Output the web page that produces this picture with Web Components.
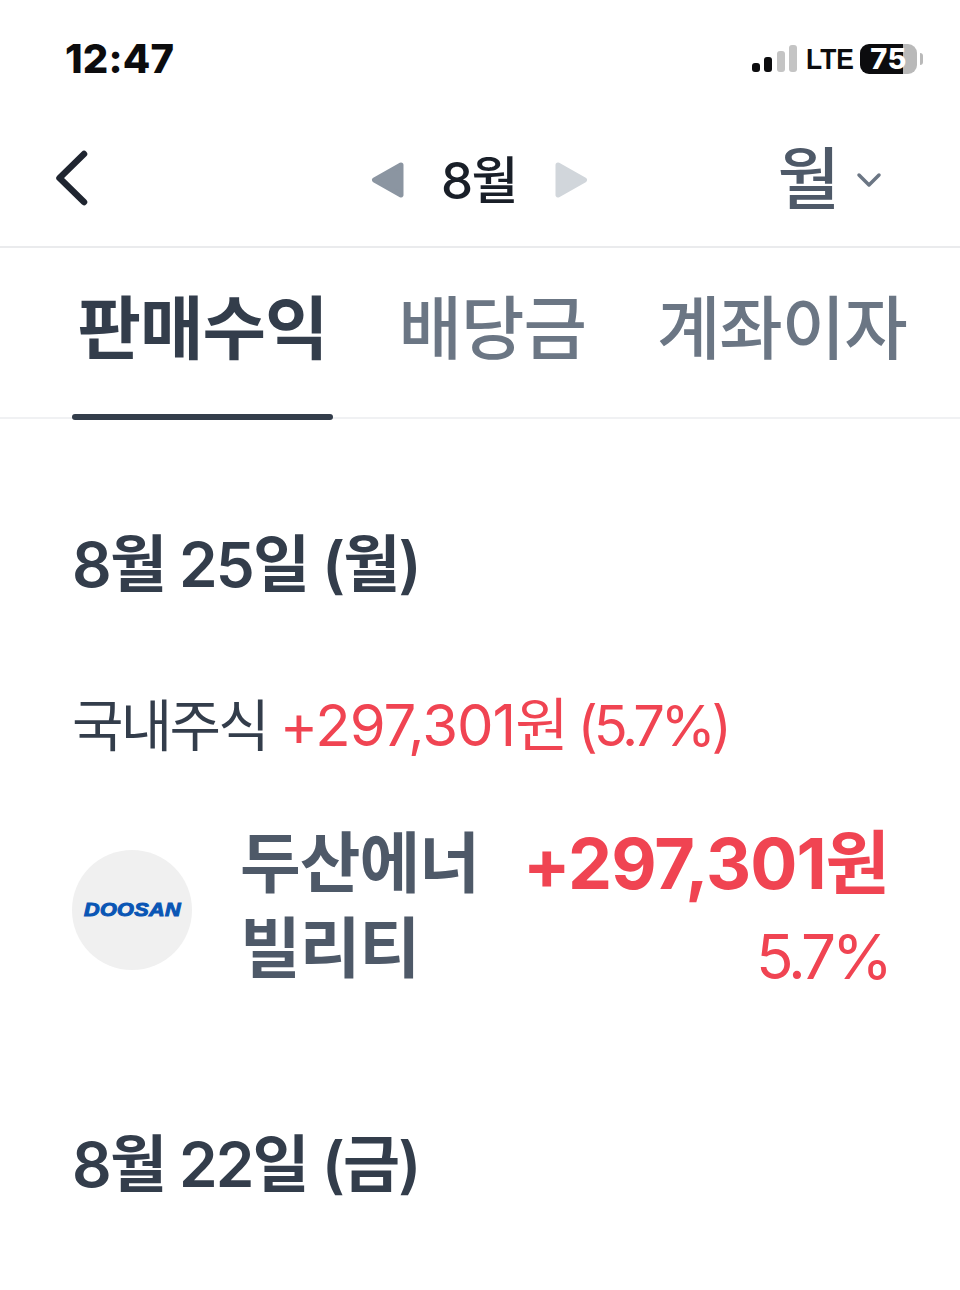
<!DOCTYPE html>
<html lang="ko">
<head>
<meta charset="utf-8">
<title>수익</title>
<style>
    html, body {
        margin: 0;
        padding: 0;
        background: #fff;
        font-family: Inter, "Noto Sans CJK KR", sans-serif;
    }
</style>
</head>
<body>
<status-bar></status-bar>
<nav-bar></nav-bar>
<tab-bar></tab-bar>
<date-heading style="--top:111px">8월 25일 (월)</date-heading>
<market-line></market-line>
<stock-row></stock-row>
<date-heading style="--top:135px">8월 22일 (금)</date-heading>

<script>
class StatusBar extends HTMLElement {
    constructor() {
        super();
        this.shadowDOM = this.attachShadow({ mode: "open" });
    }

    connectedCallback() {
        this.shadowDOM.innerHTML = `
            <style>
                :host {
                    display: flex;
                    justify-content: space-between;
                    align-items: center;
                    height: 118px;
                    box-sizing: border-box;
                    padding: 0 37px 2px 65px;
                    color: #0c0c0e;
                }
                .time {
                    font: 800 40px Inter, sans-serif;
                    letter-spacing: 0.2px;
                }
                .right {
                    display: flex;
                    align-items: center;
                    margin-top: 2px;
                }
                .lte {
                    display: inline-block;
                    font: 700 30px "Liberation Sans", sans-serif;
                    transform: scaleX(0.88);
                    transform-origin: left center;
                    margin: 0 0 0 9px;
                }
                .battery {
                    width: 57px;
                    height: 30px;
                    border-radius: 9px;
                    background: linear-gradient(90deg, #0c0c0e 75%, #b9b9b9 75%);
                    color: #fff;
                    font: 800 29px/30px Inter, sans-serif;
                    text-align: center;
                    letter-spacing: 0.5px;
                }
                .nub {
                    width: 3px;
                    height: 12px;
                    margin-left: 3px;
                    background: #b9b9b9;
                    border-radius: 0 3px 3px 0;
                }
            </style>
            <span class="time">12:47</span>
            <div class="right">
                <svg width="45" height="28" viewBox="0 0 45 28">
                    <rect x="0" y="18" width="8" height="9" rx="3" fill="#0c0c0e"/>
                    <rect x="12" y="12" width="8" height="15" rx="3" fill="#0c0c0e"/>
                    <rect x="25" y="6" width="8" height="21" rx="3" fill="#c4c4c4"/>
                    <rect x="37" y="0" width="8" height="27" rx="3" fill="#c4c4c4"/>
                </svg>
                <span class="lte">LTE</span>
                <div class="battery">75</div>
                <div class="nub"></div>
            </div>
        `;
    }
}

class NavBar extends HTMLElement {
    constructor() {
        super();
        this.shadowDOM = this.attachShadow({ mode: "open" });
    }

    connectedCallback() {
        this.shadowDOM.innerHTML = `
            <style>
                :host {
                    display: grid;
                    grid-template-columns: 1fr auto 1fr;
                    align-items: center;
                    height: 118px;
                    padding: 0 78px 10px 52px;
                    border-bottom: 2px solid #eaebed;
                    color: #191f28;
                }
                .back { display: block; }
                .month {
                    display: flex;
                    align-items: center;
                    gap: 36px;
                    font-size: 51px;
                    font-weight: 500;
                    letter-spacing: -1.5px;
                    margin-left: 25px;
                }
                .month svg { margin-top: 5px; }
                .month svg:last-child { margin-left: 1px; }
                .unit {
                    justify-self: end;
                    display: flex;
                    align-items: center;
                    gap: 16px;
                    font-size: 68px;
                    line-height: 88px;
                    font-weight: 500;
                    color: #4e5968;
                }
                .unit span { margin-top: 3px; }
                .unit svg { margin-top: 6px; }
            </style>
            <svg class="back" width="40" height="60" viewBox="0 0 40 60">
                <path d="M32 7 L7.5 31 L32 55" fill="none" stroke="#1f2530" stroke-width="6.5" stroke-linecap="round" stroke-linejoin="round"/>
            </svg>
            <div class="month">
                <svg width="34" height="38" viewBox="0 0 34 38"><path d="M30 4 L3.5 19 L30 34 Z" fill="#8b95a1" stroke="#8b95a1" stroke-width="5" stroke-linejoin="round"/></svg>
                <span>8월</span>
                <svg width="34" height="38" viewBox="0 0 34 38"><path d="M4 4 L30.5 19 L4 34 Z" fill="#d1d6db" stroke="#d1d6db" stroke-width="5" stroke-linejoin="round"/></svg>
            </div>
            <div class="unit">
                <span>월</span>
                <svg width="26" height="16" viewBox="0 0 26 16"><path d="M3 3 L13 13 L23 3" fill="none" stroke="#6b7684" stroke-width="3.5" stroke-linecap="round" stroke-linejoin="round"/></svg>
            </div>
        `;
    }
}

class TabBar extends HTMLElement {
    constructor() {
        super();
        this.shadowDOM = this.attachShadow({ mode: "open" });
    }

    connectedCallback() {
        this.shadowDOM.innerHTML = `
            <style>
                :host {
                    display: flex;
                    height: 171px;
                    box-sizing: border-box;
                    padding-left: 72px;
                    border-bottom: 2px solid #f0f1f3;
                    font-size: 69px;
                    color: #6b7684;
                    letter-spacing: -1px;
                }
                .tab {
                    display: flex;
                    align-items: center;
                    padding: 0 5.5px 21px;
                    height: 172px;
                    box-sizing: border-box;
                    font-weight: 500;
                    white-space: nowrap;
                }
                .tab.on {
                    font-weight: 700;
                    color: #333d4b;
                    position: relative;
                }
                .tab.on::after {
                    content: "";
                    position: absolute;
                    left: 0;
                    right: 0;
                    bottom: 0;
                    height: 6px;
                    background: #333d4b;
                    border-radius: 3px;
                }
                .tab + .tab { margin-left: 60px; }
            </style>
            <div class="tab on">판매수익</div>
            <div class="tab">배당금</div>
            <div class="tab">계좌이자</div>
        `;
    }
}

class DateHeading extends HTMLElement {
    constructor() {
        super();
        this.shadowDOM = this.attachShadow({ mode: "open" });
    }

    connectedCallback() {
        this.shadowDOM.innerHTML = `
            <style>
                :host {
                    display: block;
                    margin-top: var(--top, 0);
                    padding-left: 72px;
                    font-size: 62px;
                    line-height: 70px;
                    font-weight: 600;
                    color: #333d4b;
                    letter-spacing: -1.8px;
                }
            </style>
            <slot></slot>
        `;
    }
}

class MarketLine extends HTMLElement {
    constructor() {
        super();
        this.shadowDOM = this.attachShadow({ mode: "open" });
    }

    connectedCallback() {
        this.shadowDOM.innerHTML = `
            <style>
                :host {
                    display: block;
                    margin-top: 92px;
                    padding-left: 72px;
                    font-size: 56px;
                    line-height: 66px;
                    color: #333d4b;
                    letter-spacing: -2.8px;
                    white-space: nowrap;
                }
                b { font-weight: 400; color: #f04452; }
                .amount { font-size: 58px; letter-spacing: -1px; }
                .rate { margin-left: -3px; letter-spacing: -4.2px; }
            </style>
            국내주식 <b class="amount">+297,301원</b> <b class="rate">(5.7%)</b>
        `;
    }
}

class StockRow extends HTMLElement {
    constructor() {
        super();
        this.shadowDOM = this.attachShadow({ mode: "open" });
    }

    connectedCallback() {
        this.shadowDOM.innerHTML = `
            <style>
                :host {
                    display: flex;
                    align-items: center;
                    margin-top: 66px;
                    padding: 0 72px;
                    height: 170px;
                }
                .logo {
                    flex: none;
                    width: 120px;
                    height: 120px;
                    border-radius: 50%;
                    background: #f0f0f0;
                    display: flex;
                    align-items: center;
                    justify-content: center;
                    margin-right: 48px;
                }
                .logo span {
                    display: block;
                    color: #0a56b5;
                    font: italic 700 18px "Liberation Sans", sans-serif;
                    letter-spacing: 0.3px;
                    -webkit-text-stroke: 1px #0a56b5;
                    transform: scaleX(1.2);
                }
                .name {
                    flex: none;
                    width: 250px;
                    margin-top: -8px;
                    font-size: 66px;
                    line-height: 85px;
                    font-weight: 600;
                    color: #4e5968;
                    letter-spacing: -1px;
                }
                .values {
                    margin-left: auto;
                    margin-right: -1px;
                    text-align: right;
                    white-space: nowrap;
                }
                .amount {
                    font-size: 70px;
                    line-height: 85px;
                    font-weight: 700;
                    color: #f04452;
                    letter-spacing: -1px;
                }
                .rate {
                    margin-top: 8px;
                    font-size: 62px;
                    line-height: 85px;
                    color: #f04452;
                    letter-spacing: -4px;
                }
            </style>
            <div class="logo"><span>DOOSAN</span></div>
            <div class="name">두산에너빌리티</div>
            <div class="values">
                <div class="amount">+297,301원</div>
                <div class="rate">5.7%</div>
            </div>
        `;
    }
}

customElements.define("status-bar", StatusBar);
customElements.define("nav-bar", NavBar);
customElements.define("tab-bar", TabBar);
customElements.define("date-heading", DateHeading);
customElements.define("market-line", MarketLine);
customElements.define("stock-row", StockRow);
</script>
</body>
</html>
